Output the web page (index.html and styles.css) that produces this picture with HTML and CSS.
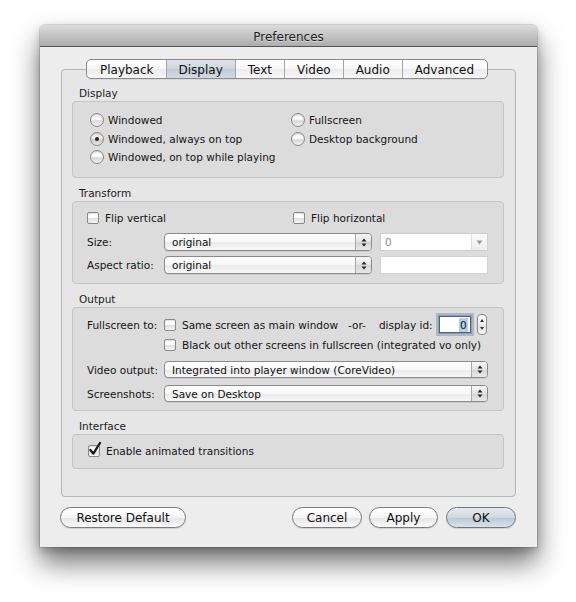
FILE: index.html
```html
<!DOCTYPE html>
<html>
<head>
<meta charset="utf-8">
<title>Preferences</title>
<link rel="stylesheet" href="styles.css">
</head>
<body>
<div class="window">
  <div class="titlebar">Preferences</div>
  <div class="wbody">
    <div class="tabrow">
      <div class="tabs">
        <div class="tab">Playback</div>
        <div class="tab sel">Display</div>
        <div class="tab">Text</div>
        <div class="tab">Video</div>
        <div class="tab">Audio</div>
        <div class="tab">Advanced</div>
      </div>
    </div>
    <div class="tabbox">
      <div class="slabel">Display</div>
      <div class="group g-display">
        <div class="radiogrid">
          <div class="opt"><span class="radio"></span>Windowed</div>
          <div class="opt"><span class="radio"></span>Fullscreen</div>
          <div class="opt"><span class="radio on"></span>Windowed, always on top</div>
          <div class="opt"><span class="radio"></span>Desktop background</div>
          <div class="opt"><span class="radio"></span>Windowed, on top while playing</div>
        </div>
      </div>

      <div class="slabel">Transform</div>
      <div class="group g-transform">
        <div class="checkrow">
          <div class="opt c1"><span class="check"></span>Flip vertical</div>
          <div class="opt"><span class="check"></span>Flip horizontal</div>
        </div>
        <div class="frow r-size">
          <div class="flabel">Size:</div>
          <div class="popup w-short"><span class="ptext">original</span><span class="parrow"><svg width="6" height="9" viewBox="0 0 6 9"><path d="M0.5 3.5 L3 0.6 L5.5 3.5Z M0.5 5.5 L3 8.4 L5.5 5.5Z" fill="#222"/></svg></span></div>
          <div class="combo"><span class="ctext">0</span><span class="cbtn"><svg width="7" height="5" viewBox="0 0 7 5"><path d="M0.5 0.5 L6.5 0.5 L3.5 4.5Z" fill="#999"/></svg></span></div>
        </div>
        <div class="frow r-aspect">
          <div class="flabel">Aspect ratio:</div>
          <div class="popup w-short"><span class="ptext">original</span><span class="parrow"><svg width="6" height="9" viewBox="0 0 6 9"><path d="M0.5 3.5 L3 0.6 L5.5 3.5Z M0.5 5.5 L3 8.4 L5.5 5.5Z" fill="#222"/></svg></span></div>
          <div class="tfield"></div>
        </div>
      </div>

      <div class="slabel">Output</div>
      <div class="group g-output">
        <div class="frow r-fs">
          <div class="flabel">Fullscreen to:</div>
          <div class="opt"><span class="check"></span>Same screen as main window</div>
          <span class="or">-or-</span>
          <span class="dispid">display id:</span>
          <div class="idfield"><span class="sel0">0</span></div>
          <div class="stepper"><svg width="6" height="15" viewBox="0 0 6 15"><path d="M1 5 L3 2 L5 5Z M1 10 L3 13 L5 10Z" fill="#333"/></svg></div>
        </div>
        <div class="frow r-black">
          <div class="flabel"></div>
          <div class="opt"><span class="check"></span>Black out other screens in fullscreen (integrated vo only)</div>
        </div>
        <div class="frow r-vo">
          <div class="flabel">Video output:</div>
          <div class="popup w-long"><span class="ptext">Integrated into player window (CoreVideo)</span><span class="parrow"><svg width="6" height="9" viewBox="0 0 6 9"><path d="M0.5 3.5 L3 0.6 L5.5 3.5Z M0.5 5.5 L3 8.4 L5.5 5.5Z" fill="#222"/></svg></span></div>
        </div>
        <div class="frow r-shot">
          <div class="flabel">Screenshots:</div>
          <div class="popup w-long"><span class="ptext">Save on Desktop</span><span class="parrow"><svg width="6" height="9" viewBox="0 0 6 9"><path d="M0.5 3.5 L3 0.6 L5.5 3.5Z M0.5 5.5 L3 8.4 L5.5 5.5Z" fill="#222"/></svg></span></div>
        </div>
      </div>

      <div class="slabel">Interface</div>
      <div class="group g-interface">
        <div class="checkrow">
          <div class="opt"><span class="check on"><svg width="14" height="15" viewBox="0 0 14 15"><path d="M2.4 8 L5.3 11.6 L12 1" fill="none" stroke="#1a1a1a" stroke-width="2.3" stroke-linecap="round" stroke-linejoin="round"/></svg></span>Enable animated transitions</div>
        </div>
      </div>
    </div>
    <div class="buttons">
      <div class="btn b-restore">Restore Default</div>
      <div class="spacer"></div>
      <div class="btn b-cancel">Cancel</div>
      <div class="btn b-apply">Apply</div>
      <div class="btn b-ok">OK</div>
    </div>
  </div>
</div>
</body>
</html>
```

FILE: styles.css
```css
* { box-sizing: border-box; }
html, body { margin: 0; padding: 0; }
body {
  background: #ffffff;
  width: 576px;
  height: 602px;
  overflow: hidden;
  font-family: "DejaVu Sans", "Noto Sans", sans-serif;
  font-size: 10.5px;
  color: #141414;
}
.window {
  margin: 25px 0 0 40px;
  width: 497px;
  height: 522px;
  background: #ededed;
  border-radius: 5px 5px 0 0;
  box-shadow: 0 16px 28px rgba(0,0,0,0.55), 0 4px 10px rgba(0,0,0,0.2), 0 0 0 1px rgba(0,0,0,0.12);
}
.titlebar {
  height: 22px;
  padding-top: 3px;
  line-height: 18px;
  text-align: center;
  font-size: 12px;
  color: #1e1e1e;
  background: linear-gradient(#dcdcdc, #adadad);
  border-bottom: 1px solid #545454;
  border-radius: 5px 5px 0 0;
  text-shadow: 0 1px 0 rgba(255,255,255,0.45);
}
.wbody { padding: 12px 21px 0 21px; }
.tabrow {
  display: flex;
  justify-content: center;
  margin-right: 3px;
  margin-bottom: -10px;
  position: relative;
  z-index: 1;
}
.tabs {
  display: flex;
  height: 20px;
  border: 1px solid #8b8b8b;
  border-radius: 5px;
  overflow: hidden;
  background: linear-gradient(#ffffff, #f6f6f6 50%, #ececec 51%, #f7f7f7);
  box-shadow: 0 1px 0 rgba(0,0,0,0.06);
}
.tab {
  font-size: 12px;
  line-height: 18px;
  padding: 1px 12px 0 12px;
  color: #111;
  border-left: 1px solid #a6a6a6;
}
.tab:first-child { border-left: none; padding-left: 13px; }
.tab:last-child { padding-right: 13px; }
.tab.sel {
  background: linear-gradient(#dfe4ea, #cdd4de 50%, #c1cad6 51%, #d3dae3);
}
.tabbox {
  height: 428px;
  border: 1px solid #b6b6b6;
  border-radius: 4px;
  background: #e6e6e6;
  padding: 16px 11px 0 10px;
}
.slabel {
  height: 15px;
  line-height: 15px;
  padding-left: 7px;
  color: #1c1c1c;
}
.group {
  border: 1px solid #c4c4c4;
  border-radius: 4px;
  background: #dcdcdc;
  margin-bottom: 8px;
}
.g-display { height: 77px; padding: 9px 0 0 18px; }
.radiogrid {
  display: grid;
  grid-template-columns: 201px 1fr;
  grid-auto-rows: 18.5px;
}
.opt {
  display: flex;
  align-items: center;
  height: 16px;
  white-space: nowrap;
  color: #141414;
}
.radiogrid .opt { height: 18.5px; }
.radio {
  width: 14px;
  height: 14px;
  border-radius: 50%;
  border: 1px solid #8a8a8a;
  background: linear-gradient(#f0f0f0, #ffffff 40%, #d9d9d9 60%, #f2f2f2);
  box-shadow: inset 0 1px 1px rgba(0,0,0,0.14);
  margin-right: 4px;
  margin-left: -1px;
  flex: none;
  display: flex;
  align-items: center;
  justify-content: center;
}
.radio.on {
  background: linear-gradient(#e2e2e2, #f4f4f4 40%, #cbcbcb 60%, #e6e6e6);
}
.radio.on::after {
  content: "";
  width: 4px;
  height: 4px;
  border-radius: 50%;
  background: #262626;
}
.check {
  width: 12px;
  height: 12px;
  border: 1px solid #8a8a8a;
  border-radius: 2px;
  background: linear-gradient(#f8f8f8, #ffffff 45%, #e0e0e0 55%, #f4f4f4);
  box-shadow: inset 0 1px 1px rgba(0,0,0,0.10);
  margin-right: 6px;
  flex: none;
  position: relative;
}
.check.on svg {
  position: absolute;
  left: -1px;
  top: -4px;
}
.g-transform { height: 83px; padding: 8px 0 0 14px; }
.checkrow { display: flex; }
.checkrow .c1 { width: 206px; }
.g-interface { height: 35px; padding: 8px 0 0 15px; margin-bottom: 0; }
.frow {
  display: flex;
  align-items: center;
}
.flabel { width: 77px; flex: none; white-space: nowrap; }
.r-size { margin-top: 7px; height: 18px; }
.r-aspect { margin-top: 5px; height: 18px; }
.popup {
  height: 18px;
  border: 1px solid #8a8a8a;
  border-radius: 4px;
  background: linear-gradient(#ffffff, #f7f7f7 50%, #e9e9e9 51%, #f8f8f8);
  display: flex;
  align-items: center;
  box-shadow: 0 1px 0 rgba(0,0,0,0.08);
  overflow: hidden;
}
.w-short { width: 208px; }
.w-long { width: 324px; }
.ptext { flex: 1; padding-left: 7px; white-space: nowrap; color: #111; }
.parrow {
  width: 16px;
  height: 100%;
  border-left: 1px solid #a9a9a9;
  background: linear-gradient(#f6f6f6, #e4e4e4 50%, #d4d4d4 51%, #e8e8e8);
  display: flex;
  align-items: center;
  justify-content: center;
}
.combo {
  margin-left: 8px;
  width: 108px;
  height: 18px;
  border: 1px solid #cfcfcf;
  background: #ffffff;
  display: flex;
  align-items: center;
}
.ctext { flex: 1; padding-left: 4px; color: #8a8a8a; }
.cbtn {
  width: 16px;
  height: 100%;
  border-left: 1px solid #dcdcdc;
  border-radius: 0 3px 3px 0;
  background: linear-gradient(#fbfbfb, #ececec);
  display: flex;
  align-items: center;
  justify-content: center;
}
.tfield {
  margin-left: 8px;
  width: 108px;
  height: 18px;
  border: 1px solid #d2d2d2;
  background: #ffffff;
}
.g-output { height: 104px; padding: 5px 0 0 14px; }
.r-fs { height: 23px; }
.r-black { height: 16px; margin-top: 1px; }
.r-vo { margin-top: 8px; }
.r-shot { margin-top: 7px; }
.r-vo .popup, .r-shot .popup { height: 17px; }
.or { margin-left: 10px; }
.dispid { margin-left: 13px; }
.idfield {
  margin-left: 6px;
  width: 32px;
  height: 17px;
  border: 1px solid #5f5f5f;
  background: #fff;
  box-shadow: 0 0 0 1px #8aa0bb, 0 0 0 3px #a9b8cb;
  display: flex;
  align-items: center;
  justify-content: flex-end;
  padding-right: 2px;
}
.sel0 { background: #b3cdee; padding: 0 1px; line-height: 14px; }
.stepper {
  margin-left: 6px;
  width: 10px;
  height: 21px;
  border: 1px solid #8a8a8a;
  border-radius: 4px;
  background: linear-gradient(#ffffff, #f0f0f0 50%, #e2e2e2 51%, #f6f6f6);
  display: flex;
  align-items: center;
  justify-content: center;
}
.buttons {
  display: flex;
  margin-top: 10px;
  margin-left: -1px;
}
.spacer { flex: 1; }
.btn {
  height: 21px;
  line-height: 19px;
  padding-top: 1px;
  border: 1px solid #7b7b7b;
  border-radius: 11px;
  text-align: center;
  font-size: 12px;
  color: #111;
  background: linear-gradient(#ffffff, #f5f5f5 50%, #e5e5e5 51%, #fafafa);
  box-shadow: 0 1px 1px rgba(0,0,0,0.12);
}
.b-restore { width: 126px; }
.b-cancel { width: 70px; }
.b-apply { width: 69px; margin-left: 7px; }
.b-ok {
  width: 70px;
  margin-left: 8px;
  background: linear-gradient(#e7ebf0, #cfd7e0 50%, #bcc7d3 51%, #dae1e8);
  border-color: #6f7782;
}
```
